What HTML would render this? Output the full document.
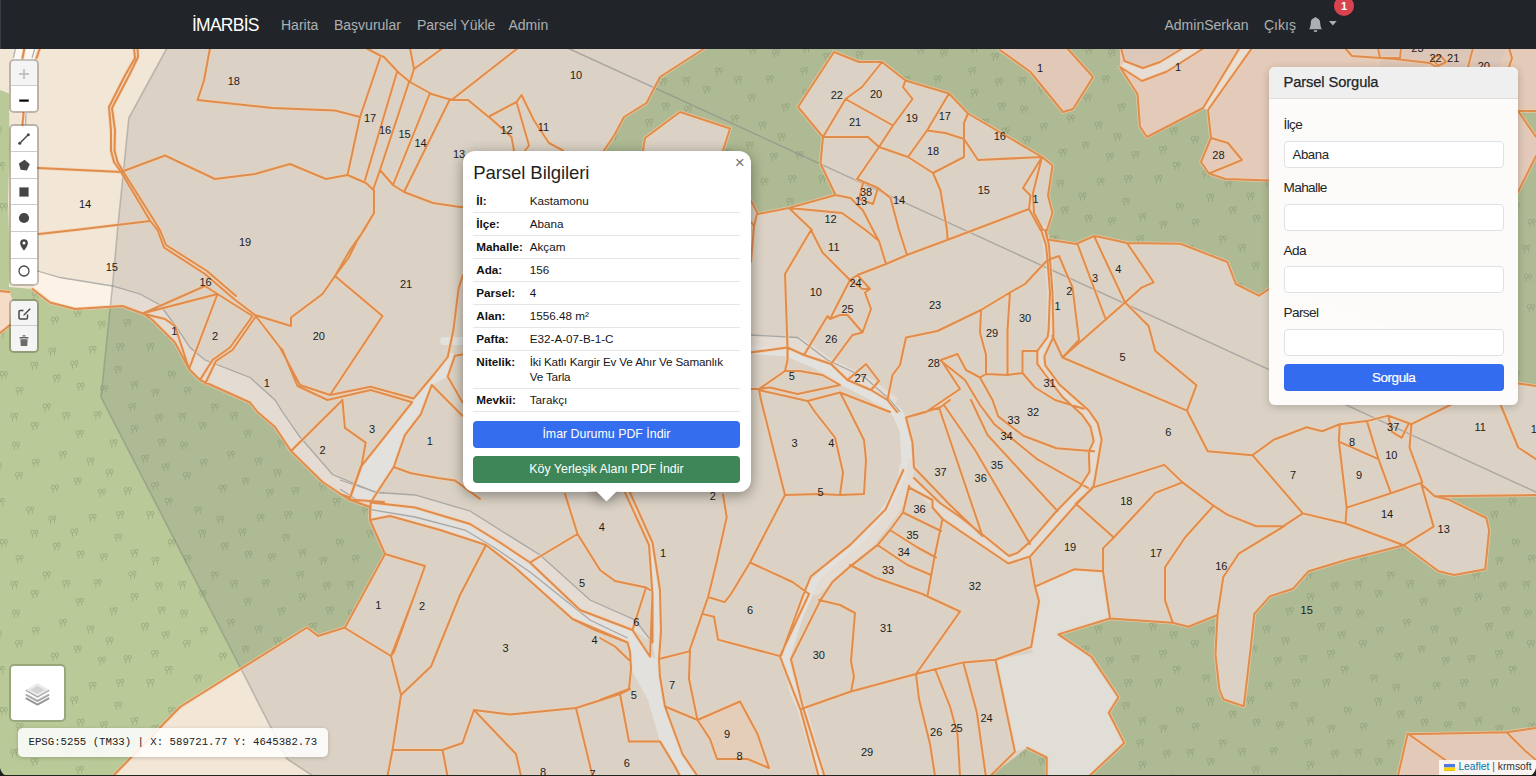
<!DOCTYPE html>
<html lang="tr">
<head>
<meta charset="utf-8">
<title>İMARBİS - Harita</title>
<style>
*{box-sizing:border-box}
html,body{margin:0;padding:0}
body{width:1536px;height:776px;overflow:hidden;position:relative;background:#f2e6d6;
 font-family:"Liberation Sans",Arial,Helvetica,sans-serif;font-size:14px;color:#212529}
#map{position:absolute;left:0;top:0;display:block}
/* navbar */
.nav{position:absolute;left:0;top:0;width:1536px;height:49px;background:#212529;z-index:10}
.nav a{position:absolute;top:.5px;line-height:48px;height:48px;color:#adb0b3;text-decoration:none;font-size:14px;white-space:nowrap}
.nav a.brand{left:192px;color:#fff;font-size:17.5px;letter-spacing:-.75px;line-height:48px}
.badge{position:absolute;left:1334px;top:-4px;width:20px;height:20px;border-radius:10px;background:#d8434f;color:#fff;
 font-size:11px;font-weight:700;text-align:center;line-height:21px}
/* leaflet bars */
.bar{position:absolute;left:9px;width:30px;border:2px solid rgba(0,0,0,.22);border-radius:5px;background-clip:padding-box;z-index:5}
.bar div{width:26px;height:26px;background:#fff;border-bottom:1px solid #ccc;position:relative;display:block}
.bar div:first-child{border-radius:3px 3px 0 0}
.bar div:last-child{border-bottom:none;border-radius:0 0 3px 3px;}
.bar div svg{position:absolute;left:0;top:0}
.bar div.dis{background:#f4f4f4}
.zb div{height:25.800px}.zb div:last-child{height:24.800px}.zb svg{top:.800px!important}.db svg{top:-.3px!important}.db div{height:26.550px}.db div:last-child{height:25.550px}
.layers{position:absolute;left:8.700px;top:664.400px;width:57.500px;height:57.500px;border:2px solid rgba(0,0,0,.17);border-radius:5px;background:#fff;background-clip:padding-box;z-index:5}
.coords{position:absolute;left:18px;top:727.5px;width:310px;height:29.5px;border-radius:5px;background:rgba(255,255,255,.86);
 font-family:"Liberation Mono","DejaVu Sans Mono",monospace;font-size:10.7px;line-height:29.5px;padding-left:10.5px;color:#222;white-space:pre;
 box-shadow:0 1px 4px rgba(0,0,0,.18);z-index:5}
.attr{position:absolute;right:0;top:760.2px;height:14.800px;background:rgba(255,255,255,.82);font-size:10.300px;line-height:14.800px;padding:0 4.500px 0 4.500px;color:#333;z-index:5;white-space:nowrap}
.attr a{color:#0078a8;text-decoration:none}
.attr svg{display:inline-block;vertical-align:-.5px;margin-right:3.5px}
/* popup */
.popup{position:absolute;left:463.2px;top:151px;width:287.5px;height:340.5px;background:#fff;border-radius:12px;
 box-shadow:0 3px 14px rgba(0,0,0,.4);z-index:7;font-size:12px;color:#333}
.tipc{position:absolute;left:586px;top:491.4px;width:40px;height:20px;overflow:hidden;z-index:7}
.tip{width:17px;height:17px;background:#fff;transform:rotate(45deg);margin:-10px auto 0;box-shadow:0 3px 14px rgba(0,0,0,.4)}
.popup h5{position:absolute;left:10px;top:9.700px;margin:0;font-size:18.6px;font-weight:400;line-height:24px;color:#1f1f1f;letter-spacing:-.1px;white-space:nowrap}
.popup .x{position:absolute;right:3px;top:2px;width:16px;height:20px;font-size:17px;line-height:20px;color:#757575;text-align:center}
.popup table{position:absolute;left:9.5px;top:38.700px;width:267.5px;border-collapse:collapse;font-size:11.700px;line-height:15px;color:#161616}
.popup td{white-space:nowrap;padding:3px 3px 4px;border-bottom:1px solid #e6e6e6;vertical-align:top}
.popup td:first-child{font-weight:700;width:54px;padding-left:3.5px;color:#111;white-space:nowrap}
.pbtn{position:absolute;left:9.5px;width:267.5px;height:27px;border-radius:4px;color:#fff;text-align:center;font-size:12.400px;line-height:27px;white-space:nowrap}
/* panel */
.panel{position:absolute;left:1269px;top:67px;width:248.5px;height:338px;background:rgba(253,252,251,.985);border-radius:6px;
 box-shadow:0 2px 8px rgba(0,0,0,.2);z-index:6;overflow:hidden}
.panel .hd{height:31.5px;background:#f0efef;border-bottom:1px solid #dfdfdf;padding-left:14.5px;font-size:14.700px;line-height:31px;color:#212529;letter-spacing:-.1px;-webkit-text-stroke:.25px #212529}
.panel label{position:absolute;left:14.5px;font-size:13.600px;letter-spacing:-.62px;line-height:16px;color:#212529}
.panel .inp{position:absolute;left:14.5px;width:220.3px;height:27.3px;border:1px solid #dee2e6;border-radius:4px;background:#fff;
 font-size:13.200px;letter-spacing:-.4px;line-height:25px;padding-left:8px;color:#212529}
.panel .btn{position:absolute;left:14.5px;top:296.7px;width:220.3px;height:27.3px;border-radius:4px;background:#336cee;color:#fff;text-align:center;font-size:13.500px;letter-spacing:-.45px;line-height:27px;-webkit-text-stroke:.2px #fff}
.edge{position:absolute;left:0;top:775px;width:1536px;height:1px;background:#23251f;z-index:20}
</style>
</head>
<body>
<svg id="map" width="1536" height="776" viewBox="0 0 1536 776">
<defs><g id="t" transform="scale(.97)"><ellipse cx="2" cy="2.5" rx="1.8" ry="2.1"/><ellipse cx="6" cy="2" rx="1.5" ry="1.800"/><path d="M2 4.600V8.500M6 3.800V7.500"/></g><pattern id="tr" width="168" height="168" patternUnits="userSpaceOnUse"><g fill="none" stroke="#9aad7f" stroke-width="1.050" opacity=".9"><use href="#t" x="76.0" y="94.0"/><use href="#t" x="155.3" y="78.2"/><use href="#t" x="31.0" y="86.0"/><use href="#t" x="105.8" y="133.2"/><use href="#t" x="15.8" y="51.0"/><use href="#t" x="15.2" y="136.0"/><use href="#t" x="116.5" y="7.0"/><use href="#t" x="165.0" y="162.1"/><use href="#t" x="165.0" y="-5.9"/><use href="#t" x="-3.0" y="162.1"/><use href="#t" x="-3.0" y="-5.9"/><use href="#t" x="109.9" y="103.4"/><use href="#t" x="26.5" y="2.5"/><use href="#t" x="88.8" y="10.0"/><use href="#t" x="74.0" y="141.5"/><use href="#t" x="76.8" y="46.7"/><use href="#t" x="141.2" y="118.9"/><use href="#t" x="53.0" y="38.6"/><use href="#t" x="48.6" y="11.8"/><use href="#t" x="128.7" y="67.3"/><use href="#t" x="0.1" y="35.2"/><use href="#t" x="12.3" y="105.7"/><use href="#t" x="130.8" y="45.3"/><use href="#t" x="162.0" y="127.4"/><use href="#t" x="-6.0" y="127.4"/><use href="#t" x="94.0" y="75.2"/><use href="#t" x="32.0" y="123.0"/><use href="#t" x="51.1" y="148.7"/><use href="#t" x="62.4" y="76.1"/><use href="#t" x="30.7" y="25.9"/><use href="#t" x="100.2" y="49.3"/><use href="#t" x="123.8" y="151.2"/><use href="#t" x="59.1" y="115.1"/><use href="#t" x="146.6" y="7.0"/><use href="#t" x="86.8" y="121.6"/><use href="#t" x="151.6" y="53.1"/><use href="#t" x="43.1" y="67.5"/><use href="#t" x="130.7" y="89.2"/><use href="#t" x="70.6" y="24.6"/><use href="#t" x="10.5" y="77.1"/><use href="#t" x="98.1" y="152.8"/><use href="#t" x="151.3" y="146.1"/><use href="#t" x="114.3" y="29.8"/><use href="#t" x="158.1" y="102.5"/></g></pattern></defs>
<rect width="1536" height="776" fill="#f2e6d6"/>
<g>
<polygon points="0,90 9,93.5 9.5,150 8,200 9.5,250 9,287 32.5,289 50,302.5 75,309 122.5,306 144,314 152.5,320 175,342.5 189,369 200,380 250,402.5 257.5,412 275,427 291,451 322.5,482 349,499.5 370,507 370,520 385,554 345,627.5 318,636 307,627.5 180,707 113,776 0,776" fill="#bac998"/>
<polygon points="705,48 660,77 646.5,103 624,117 615,134 604,150.5 598,165 700,170 748,195 758,214 789,208 835.5,195 850,170 1042,157 1052.5,165.5 1048,195.5 1052.5,213 1047,230 1047.5,239.5 1076,244 1094,236 1100,237 1127,243 1180.5,243.7 1227.4,262 1235.8,284 1259,295.7 1269,289 1400,330 1518,383.4 1536,386 1536,48" fill="#bac998"/>
<polygon points="1058.4,634.4 1110,618.5 1172.8,622.8 1188.4,626.7 1217.5,615 1215.5,654.6 1219.4,689.5 1223.3,699.2 1243.8,706.2 1250.4,650.7 1254.3,613.9 1269.8,596.4 1293.1,588.7 1308.6,571.2 1347.5,559.5 1403.7,545.2 1438.6,571.2 1454.2,575 1485.2,569.3 1489.1,530.4 1486.4,518 1448.3,499.4 1434.7,496.3 1536,495 1536,776 1089.4,776 1124.3,743.1 1108.8,712.8 1118.5,697.3 1091.3,656.6" fill="#bac998"/>
<polygon points="990.4,776 1027.3,747.8 1046.7,757.5 1046.7,776" fill="#bac998"/>
<polygon points="0,90 9,93.5 9.5,150 8,200 9.5,250 9,287 32.5,289 50,302.5 75,309 122.5,306 144,314 152.5,320 175,342.5 189,369 200,380 250,402.5 257.5,412 275,427 291,451 322.5,482 349,499.5 370,507 370,520 385,554 345,627.5 318,636 307,627.5 180,707 113,776 0,776" fill="url(#tr)"/>
<polygon points="705,48 660,77 646.5,103 624,117 615,134 604,150.5 598,165 700,170 748,195 758,214 789,208 835.5,195 850,170 1042,157 1052.5,165.5 1048,195.5 1052.5,213 1047,230 1047.5,239.5 1076,244 1094,236 1100,237 1127,243 1180.5,243.7 1227.4,262 1235.8,284 1259,295.7 1269,289 1400,330 1518,383.4 1536,386 1536,48" fill="url(#tr)"/>
<polygon points="1058.4,634.4 1110,618.5 1172.8,622.8 1188.4,626.7 1217.5,615 1215.5,654.6 1219.4,689.5 1223.3,699.2 1243.8,706.2 1250.4,650.7 1254.3,613.9 1269.8,596.4 1293.1,588.7 1308.6,571.2 1347.5,559.5 1403.7,545.2 1438.6,571.2 1454.2,575 1485.2,569.3 1489.1,530.4 1486.4,518 1448.3,499.4 1434.7,496.3 1536,495 1536,776 1089.4,776 1124.3,743.1 1108.8,712.8 1118.5,697.3 1091.3,656.6" fill="url(#tr)"/>
<polygon points="990.4,776 1027.3,747.8 1046.7,757.5 1046.7,776" fill="url(#tr)"/>
</g>
<polygon points="834,52 859,62 882,62 905.5,80.5 949,93.5 968,113.5 1042,157 1000,175 835.5,195 820.5,163.5 823,137 798,107" fill="#f2e6d6"/>
<polygon points="643,152 645,138 680,112 730,128.5 723,152 715,200 650,200" fill="#f2e6d6"/>
<polygon points="1035,586.7 1074,569.3 1103,571.2 1110,618.5 1058.4,634.4 1091.3,656.6 1118.5,697.3 1108.8,712.8 1124.3,743.1 1089.4,776 1046.7,776 1046.7,757.5 1027.3,747.8 1014.9,751.6 995.5,659.7 1033.1,652.7 1031.2,646.9 1039,601" fill="#f8f5ec"/>
<polygon points="37.5,271 60,277.5 112.5,286 140,294 160,305 175,325 190,347.5 205,360 250,377.5 275,400 282.5,412 300,437 332.5,474.5 375,492 370,507 349,499.5 322.5,482 291,451 275,427 257.5,412 250,402.5 200,380 189,369 175,342.5 152.5,320 144,314 122.5,306 75,309 50,302.5 32.5,289" fill="#fdf2e6"/>
<polygon points="340,480 377.5,492.5 415,495 470,511 540,555 590,600 635,620 652.5,642.5 632.5,630 580,610 530,562.5 500,542.5 470,524 415,507.5 371,502.5 340,488" fill="#fdf2e6"/>
<polyline points="751,344 797.5,346 827.5,367 865,385 893,406" fill="none" stroke="#fdf2e6" stroke-width="18" stroke-linejoin="round"/>
<polygon points="434.2,374 414.6,397.3 412.2,402.2 361.5,465.8 349.8,498.9 370.6,502.5 393.8,467 404.9,435.2 420.8,414.4 431.8,385 447.7,376.5 455,355.7 451,352 447.7,357" fill="#fcf9f4"/>
<polygon points="371,502.5 415,507.5 470,524 500,542.5 530,562.5 580,610 632.5,630 650,656.5 659,659 660,676.5 665,706.5 682.5,754 697.5,776 680,776 675,766.5 660,741.5 648,700 631,669 630,652 627.5,642.5 572.5,619 515,567.5 486,545 440,530 390,516 370,520" fill="#fcf9f4"/>
<polygon points="647,540 649,545 652.5,595 652.5,642.5 655,657 659,659 661,631.5 660,590 652.5,542.5" fill="#fcf9f4"/>
<polyline points="444,341 463,341" fill="none" stroke="#fcf9f4" stroke-width="8" stroke-linejoin="round" stroke-linecap="round"/>
<polyline points="750,350 787.5,352.5 805,360 827.5,369 845,382.5 867.5,394 888,404" fill="none" stroke="#fcf9f4" stroke-width="8" stroke-linejoin="round" stroke-linecap="round"/>
<polyline points="888,404 898,414 905,430 907,462.5" fill="none" stroke="#fcf9f4" stroke-width="11" stroke-linejoin="round" stroke-linecap="round"/>
<polyline points="907,466 904,485 893,508 866,543 838,566 815,588" fill="none" stroke="#fdf2e6" stroke-width="15" stroke-linejoin="round" stroke-linecap="round"/>
<polyline points="905,462.5 901,480 888,505 863,538 833,563 811,584" fill="none" stroke="#fcf9f4" stroke-width="6" stroke-linejoin="round" stroke-linecap="round"/>
<polyline points="812,585 797.5,619 786,656.5 794.5,692 802,709 821.5,776" fill="none" stroke="#fcf9f4" stroke-width="9" stroke-linejoin="round" stroke-linecap="round"/>
<polyline points="912,481 940,510 960,524 981,540 1008.5,559.5 1030,550 1065,509 1084,489 1092,472 1095,452 1097.5,440 1094,425 1085,412.5 1061,391 1044.5,369.5 1041,360 1041,354 1050.5,337 1051,292 1047,245 1043,230" fill="none" stroke="#fdf2e6" stroke-width="8" stroke-linejoin="round" stroke-linecap="round"/>
<polyline points="26.5,47 23.5,59" fill="none" stroke="#fcf9f4" stroke-width="21" stroke-linejoin="round" stroke-linecap="round"/>
<polyline points="24,113 23,125" fill="none" stroke="#fcf9f4" stroke-width="5" stroke-linejoin="round" stroke-linecap="round"/>
<polyline points="37.5,271 60,277.5 112.5,286 140,294 160,305 175,325 190,347.5 205,360 250,377.5 275,400 282.5,412 300,437 332.5,474.5 375,492 384,493" fill="none" stroke="#b3b1ad" stroke-width="1.3"/>
<polyline points="340,480 377.5,492.5 415,495 470,511 540,555 590,600 635,620 652.5,642.5" fill="none" stroke="#b3b1ad" stroke-width="1.3"/>
<polyline points="750,335 797.5,337.5 827.5,360 865,377.5 890,400 900,412" fill="none" stroke="#b3b1ad" stroke-width="1.3"/>
<polyline points="340,489 372.5,510 415,517 465,530 495,548 530,572 565,600 590,620 627.5,638" fill="none" stroke="#b3b1ad" stroke-width="1.3"/>
<polyline points="15.5,48 13.5,58" fill="none" stroke="#b3b1ad" stroke-width="1.3"/>
<polyline points="35,48 32,58" fill="none" stroke="#b3b1ad" stroke-width="1.3"/>
<polyline points="26,113 25.5,125" fill="none" stroke="#b3b1ad" stroke-width="1.3"/>
<polygon points="171.5,40 167,48 128.8,118 117.5,230 113,280 101,397 240,667 287,759 313,776 320,780 1545,780 1545,40" fill="rgb(130,130,130)" fill-opacity=".2" stroke="#777" stroke-opacity=".38" stroke-width="1.600"/>
<polygon points="1000,48 1000,50 1030.5,72 1063,112 1073,109 1093,77 1067,48" fill="#e2c8b7"/>
<polygon points="1120,48 1120,67 1137.5,94 1140,126.5 1147,137 1203,108 1208,110 1211,138 1201,162 1209,173.5 1225.5,179 1269,180.5 1400,182 1518,192 1536,156 1536,137 1518,111 1536,111 1536,48" fill="#e4cab8"/>
<polygon points="1121,48 1124.5,61 1143,68 1160,62 1183,48" fill="#dcc7b9"/>
<polygon points="1120,67 1124.5,61 1143,68 1160,62 1183,48 1204,48 1167,71.5 1142,81" fill="#e6ddd4"/>
<polygon points="1239.5,48 1203,108 1208,110 1252,48" fill="#e9dfd3"/>
<polygon points="1380,48 1380,66 1500,66 1506,48" fill="#dcc6b8"/>
<polygon points="1518,111 1536,137 1536,156 1518,192" fill="#e3c9b9"/>
<polygon points="1518,111 1536,111 1536,137" fill="#b0ba93"/>
<polygon points="1397.9,776 1407.6,734.2 1506.6,732.2 1536,728 1536,776" fill="#e3c9b8"/>
<polygon points="697.5,720 740,701.5 757.5,734 769,768 747.5,759 717,759 710,739" fill="#e4cdb9"/>
<polygon points="0,291 9.5,292 12.5,300 10,325 0,332.5" fill="#f4dcc7"/>
<polyline points="567.5,48 1536,492" fill="none" stroke="#8a8a8a" stroke-width="1.4" stroke-opacity=".6"/>
<path id="pl" d="M134 48 L135 58 L125 75.5 L109 107 L111 130.5 L111 150.5 L114 162 L121 172M137.5 48 L138 57 L129 75.5 L112 108 L115 130.5 L114.5 150.5 L117.5 162 L122.5 170.5M38 168 L121.7 172M121 172 L165 155.5 L215 179 L255 174 L290 164 L326 179 L347.5 175 L366 183 L374 190.5M210 48 L204 80.5 L197.5 100 L272.5 108 L335 110.5 L360 117M366 48 L380 55.5 L384 57 L399 73 L410 82 L431.5 94 L451.5 100 L468 100 L493 120.5 L511.5 137 L514 150.5M380 58 L360 117 L347.5 175M397 72 L365 180M409 82 L380 170 L373 190M430 93 L393 185M450 99 L404 192M380 170 L393 185 L404 192 L433 203 L460 207 L464 207M374 190.5 L374 213 L357 241 L348.5 258 L335 276M121 172 L150 220.5 L157.5 230 L164 247.5 L205 274 L234 299 L255 315 L291 326 L291 317.5 L322.5 294 L335 276 L350 250 L364 230 L374 213M122.5 170.5 L152.5 218 L160 230 L166 245 L207 271 L236 296M150 221 L75 230 L39 234M410 48 L414 69 L410 82M443 48 L414 69M518 48 L451.5 100M490 116 L516.5 102 L521.5 95 L534 120.5 L549 143 L563 150.5M516.5 102 L529 145.5 L525 150.5M705 48 L660 77 L646.5 103 L624 117 L615 134 L604 150.5M643 150.5 L645 138 L680 112 L730 128.5 L723 150.5M24.5 48 L22.5 58M40 48 L36.5 58M23.5 113 L22.5 125M0 291 L9.5 292M0 333 L10 325M32.5 289 L50 302.5 L75 309 L122.5 306 L144 314 L152.5 320 L175 342.5 L189 369 L200 380 L250 402.5 L257.5 412 L275 427 L291 451 L322.5 482 L349 499.5 L370 507 L370 520 L385 554 L345 627.5 L318 636 L307 627.5 L180 707 L113 776M335 276 L382.5 316 L330 395 L300 385 L280 347.5 L255 315M144 313 L205 286 L217.5 294 L144 313M217.5 294 L189 369M144 314 L165 319 L175 326 L189 369M217.5 294 L252.5 316 L230 347.5 L212.5 360 L200 380M255 317.5 L232.5 350 L216 361 L205 384M300 385 L330 395 L370.6 386.8 L413.4 398.5 L414.6 397.3 L434.2 374 L447.7 357 L453.4 330 L458.6 288 L463 275M282 349 L297.5 386 L327.5 400 L370.6 390 L412.2 402.2M342.4 399.8 L344.9 427.9 L365.7 442.6 L361.5 465.8 L349.8 498.9M342.5 400 L291 451M361.5 465.8 L412.2 402.2M361 466 L350 497.5 L340 494M462.4 415.7 L431.8 385 L420.8 414.4 L404.9 435.2 L393.8 467 L411 473.2 L437.9 478 L455 480.5 L480 498.9M393.8 467 L370.6 502.5 L370 520M462.4 354.5 L455 355.7 L447.7 376.5 L462.4 402.2M349 499.5 L384 502M371 502.5 L415 507.5 L470 524 L500 542.5 L530 562.5 L580 610 L632.5 630M370 520 L390 516 L440 530 L486 545 L515 567.5 L572.5 619 L627.5 642.5 L630 652 L631 669 L629 689 L600 700M486 545 L460 595 L431 666.5 L401 695M385 554 L425 566 L394 652 L391 656M565 494 L577.5 534 L600 570 L615 581 L646 587.5 L650 590M577.5 534 L530 562.5M625 492.5 L649 545 L652.5 595 L652.5 642.5M630 492.5 L652.5 542.5 L660 590 L661 631.5 L659 659 L660 676.5 L665 706.5 L682.5 754 L697.5 776M646 587.5 L632.5 630 L650 656.5 L652.5 594M572.5 619 L595 630 L627.5 642.5M600 638 L615 646.5 L629 660M345 628 L391 656 L401 695 L392.5 750 L387.5 776M415 594 L391 656M392.5 750 L442.5 750 L462.5 743 L474 710 L510 714.5 L576 708 L620 694 L630 689M442.5 750 L447.5 776M474 710 L516 754 L521 776M576 708 L592.5 776M620 694 L629 741.5 L660 741.5 L675 766.5 L680 776M659 659 L689.2 651.4M708.1 597 L724.7 602.1 L731 594M690 650 L689 679 L697.5 720 L665 706.5M697.5 720 L740 701.5 L757.5 734 L769 768 L747.5 759 L717 759 L710 739 L697.5 720M702.2 613.9 L714 616.7 L718 639.6 L780 656.1 L809 594M780 656.5 L787 675 L800.8 710.5 L818.5 776M723 494.4 L726.7 517.3 L716 564.6 L708.1 597 L702.2 613.9 L689.2 651.4M761 400 L785 495 L750 562.5 L731 594M785 495 L820 494 L840 495 L864 494M807.5 401 L815 412 L835 437.5 L843 472.5 L840 495M840 392.5 L845 402 L864 440 L866 460 L864 494M750 562.5 L792.5 582 L809 594M811 230 L785 274 L787.5 347.5 L787.5 360 L785 371 L759 389 L750 389M811 230 L822.5 252.5 L850 280 L830 319 L827.5 316 L804 355 L831 364M899 230 L907 255M947 230 L947.5 239.5M1029 209 L971 231 L907 255 L886 264 L857.5 275 L850 280M857.5 275 L870 289 L865 292.5 L871 309 L862.5 332.5 L852.5 335 L831 364M850 280 L862.5 289 L870 289M830 319 L840 315 L847.5 315 L862.5 332.5M750 352.5 L787.5 347.5 L804 355 L831 364 L847.5 380 L871 390 L887.5 400 L897 412M759 389 L770 387.5 L797.5 394 L840 385 L822.5 375 L800 371 L785 371M847.5 380 L866 364 L879 381 L871 390M759 390 L761 400M759 390 L807.5 401 L840 392.5 L890 412M1047.5 260 L1025 284 L1010 292.5 L981 310 L937.5 331 L906 337.5 L900 365 L892.5 375 L887.5 400M981 310 L980 332.5 L986 355 L986 374M1010 292.5 L1007.5 330 L1007.5 375M980 377.5 L986 374 L1007.5 375 L1022.5 373 L1022.5 351 L1037.5 351M1041 230 L1046 245 L1047.5 260 L1050 292.5 L1048.6 330 L1047.6 337 L1037.3 351 L1037.3 363.8 L1044.4 373.5 L1063 397.6 L1081.7 414.4 L1090.4 426.6 L1093.7 441.1 L1088.8 451.7 L1089.5 471.7 L1079.8 487.2 L1056.6 511 L1029.2 542.6 L1017.3 552.9 L1009 556 L982.5 534.5 L960 516.8 L940 503 L914 478M1045 230 L1049 245 L1050 260 L1052.5 292.5 L1053.4 330 L1053.4 337 L1044.4 356.4 L1045.3 365.4 L1059.8 384.8 L1088.8 410.5 L1097.8 423.4 L1101.7 439.5 L1093.7 486.2 L1074.3 506.5 L1030.2 556.4 L1008.3 563.5 L980.9 545 L960 531 L942.5 519M1047.5 260 L1059 256 L1072.5 287.5 L1079 340 L1062.5 357.5 L1052.5 336M1077.5 244 L1105 317.5M1094 236 L1125 302.4M1046 230 L1047.5 239.5 L1076 244 L1094 236 L1100 237 L1127 243 L1180.5 243.7 L1227.4 262 L1235.8 284 L1259 295.7 L1269 289M1127 243 L1153.6 282.3 L1142 287.3 L1125 302.4 L1062.5 357.5M1062.5 357.5 L1187 410.7 L1196.5 385.2 L1155.3 351 L1148.6 326 L1125 302.4M1187 410.7 L1207.7 451.3 L1252.4 455.2 L1302.8 513.4 L1283.4 526.2 L1256.3 526.2 L1227.2 514.6 L1213.6 505.7 L1182.5 482.4 L1164.3 464.9 L1093.3 487.4M1022.5 373 L1035 387.5 L1055 400 L1083.6 408.7M941 360 L957.5 354 L966 370 L980 377.5 L992.5 400 L998.2 416.4 L1023.4 435.8 L1056.4 448.2 L1094 451.3M941 360 L960 389 L940 402.5 L926 412 L906 417.5M941 361 L965 380 L980 405 L994.3 424.2 L1037 459.1 L1088 488M906 417.5 L940 407.5 L950 400M906 417.5 L912.5 442.5 L914 467.5 L950 505 L982.5 536M939 407.5 L982.5 536M944 405 L975 450 L1030 544M971 400 L987.5 435 L1057.5 511M909 487.5 L932.5 500 L932.5 507.5 L942.5 519 L940 531 L934.7 556 L927.5 596M909.2 485.8 L903 512.5 L890 530 L877.7 544.9 L850.1 566.6 L832.5 582 L820.5 600.1M903 512.5 L941 531M890 530 L917.5 547.5 L936 557.5M877.5 545 L907.5 565 L931 575M850 565 L875 577.5 L922.5 594 L927.5 596.5 L960 611.5 L916 674M1030 557.6 L1035 586.7 L1039 601 L1031.2 646.9 L995.5 659.7 L963.3 662.4 L916 674 L851 691.5 L801 709M820.5 600.1 L791 659.3 L802.8 706.6 L824.5 776M819 600 L840 605 L855 613 L851 661.5 L854 676.5 L851 691.5M916 674 L919 699 L930 744 L935 776M935 669 L950 706.5 L957.5 734 L960 776M963.3 662.4 L976.9 712.8 L985.8 776M995.5 659.7 L1014.9 751.6 L990.4 776M1027.3 747.8 L1046.7 757.5 L1046.7 776M1035 586.7 L1074 569.3 L1103 571.2 L1110 618.5 L1058.4 634.4 L1091.3 656.6 L1118.5 697.3 L1108.8 712.8 L1124.3 743.1 L1089.4 776M1093.3 487.4 L1075.8 503.7 L1113.8 537.5 L1103 548.4 L1103 571.2M1182.5 482.4 L1155.4 492.9 L1113.8 537.5M1213.6 505.7 L1184.5 538.2 L1165 567.3 L1165 600.3 L1172.8 622.8M1283.4 526.6 L1238.8 553.7 L1223.3 577 L1217.5 615M1110 618.5 L1172.8 622.8 L1188.4 626.7 L1217.5 615 L1215.5 654.6 L1219.4 689.5 L1223.3 699.2 L1243.8 706.2 L1250.4 650.7 L1254.3 613.9 L1269.8 596.4 L1293.1 588.7 L1308.6 571.2 L1347.5 559.5 L1403.7 545.2 L1438.6 571.2 L1454.2 575 L1485.2 569.3 L1489.1 530.4 L1486.4 518 L1448.3 499.4 L1434.7 496.3 L1536 495M1302.8 513.4 L1345.5 523.5 L1403.7 545.2 L1433.6 526.6 L1421.2 483.9 L1434.7 496.3M1345.5 523.5 L1346.7 507.6 L1338.9 441.6 L1339.7 424.2M1346.7 507.6 L1390.9 493.2 L1422.3 482.4 L1409.5 447.5 L1411.5 424.2M1338.9 441.6 L1378.5 459.1 L1390.9 493.2M1366.9 421.1 L1378.5 459.1M1252.4 455.2 L1273.7 439.7 L1306.7 427.3 L1322.2 431.2 L1339.7 424.2 L1366.9 421.1 L1388.2 415.6 L1411.5 424.2 L1452.2 404M1388.2 415.6 L1392.1 431.9 L1401.8 437.8 L1408.4 424.2M1500.7 404.8 L1518.2 447.5 L1536 459.1M1518 383.4 L1536 386M1397.9 776 L1407.6 734.2 L1506.6 732.2 L1536 728M1407.6 733.5 L1468 776M1506.6 732.2 L1526 751.6 L1536 760M834 52 L859 62 L882 62 L905.5 80.5 L949 93.5 L968 113.5 L1042 157 L1052.5 165.5 L1048 195.5 L1052.5 213 L1047 230M834 52 L798 107 L823 137 L820.5 163.5 L835.5 195 L789 208 L758 214M882 62 L862 87 L845.5 99 L823 137M845.5 99 L893 125.5M905.5 80.5 L903 87 L912.5 99 L893 125.5 L879 147 L857 179 L878 188 L873 204 L859 199 L863 183M823 137 L868 137 L879 147 L908 157 L933 173 L940.5 190.5 L947 230M949 93.5 L927 130.5 L908 157M927 130.5 L945.5 133 L964 139M968 113.5 L964 123 L964 139 L964 157 L933 173M964 139 L978 160 L1042 157M1042 157 L1023 188 L1030.5 195.5 L1029 209 L1040.5 230M1042 157 L1033 193 L1034 213 L1043 230M878 188 L890.5 198 L899 230M835.5 195 L850.5 198 L863 210.5 L873 230 L879 241 L886 264M789 208 L842 213 L865.5 230 L879 241M789 208 L812 230M1000 50 L1030.5 72 L1063 112 L1073 109 L1093 77 L1067 48M1120 67 L1142 81 L1167 71.5 L1204 48M1120 67 L1137.5 94 L1140 126.5 L1147 137 L1203 108 L1239.5 48M1121 48 L1124.5 61 L1143 68 L1160 62 L1183 48M1208 110 L1252 48M1208 110 L1211 138 L1228 143 L1242 160 L1209 173.5 L1201 162 L1211 138M1209 173.5 L1225.5 179 L1269 180.5M1518 111 L1536 111M1518 111 L1536 137M1536 156 L1518 192M1509 48 L1512 58 L1509 67M1345 48 L1352 56 L1395 59 L1430 63 L1436 67M1378 48 L1380 58 L1400 58 L1401 48M1432 58 L1440 55 L1446 62 L1438 66 L1432 58M1473 48 L1468 67M903.3 470 L885.6 509.4 L850.1 544.9 L810.7 576.5 L802.8 596.2 L781.1 655.3M748 195 L758 214M757 214 L754 226 L751 262M751 222 L754 226" fill="none" stroke="#f8cfa8" stroke-opacity=".7" stroke-width="3.600" stroke-linejoin="round" stroke-linecap="round"/>
<path d="M134 48 L135 58 L125 75.5 L109 107 L111 130.5 L111 150.5 L114 162 L121 172M137.5 48 L138 57 L129 75.5 L112 108 L115 130.5 L114.5 150.5 L117.5 162 L122.5 170.5M38 168 L121.7 172M121 172 L165 155.5 L215 179 L255 174 L290 164 L326 179 L347.5 175 L366 183 L374 190.5M210 48 L204 80.5 L197.5 100 L272.5 108 L335 110.5 L360 117M366 48 L380 55.5 L384 57 L399 73 L410 82 L431.5 94 L451.5 100 L468 100 L493 120.5 L511.5 137 L514 150.5M380 58 L360 117 L347.5 175M397 72 L365 180M409 82 L380 170 L373 190M430 93 L393 185M450 99 L404 192M380 170 L393 185 L404 192 L433 203 L460 207 L464 207M374 190.5 L374 213 L357 241 L348.5 258 L335 276M121 172 L150 220.5 L157.5 230 L164 247.5 L205 274 L234 299 L255 315 L291 326 L291 317.5 L322.5 294 L335 276 L350 250 L364 230 L374 213M122.5 170.5 L152.5 218 L160 230 L166 245 L207 271 L236 296M150 221 L75 230 L39 234M410 48 L414 69 L410 82M443 48 L414 69M518 48 L451.5 100M490 116 L516.5 102 L521.5 95 L534 120.5 L549 143 L563 150.5M516.5 102 L529 145.5 L525 150.5M705 48 L660 77 L646.5 103 L624 117 L615 134 L604 150.5M643 150.5 L645 138 L680 112 L730 128.5 L723 150.5M24.5 48 L22.5 58M40 48 L36.5 58M23.5 113 L22.5 125M0 291 L9.5 292M0 333 L10 325M32.5 289 L50 302.5 L75 309 L122.5 306 L144 314 L152.5 320 L175 342.5 L189 369 L200 380 L250 402.5 L257.5 412 L275 427 L291 451 L322.5 482 L349 499.5 L370 507 L370 520 L385 554 L345 627.5 L318 636 L307 627.5 L180 707 L113 776M335 276 L382.5 316 L330 395 L300 385 L280 347.5 L255 315M144 313 L205 286 L217.5 294 L144 313M217.5 294 L189 369M144 314 L165 319 L175 326 L189 369M217.5 294 L252.5 316 L230 347.5 L212.5 360 L200 380M255 317.5 L232.5 350 L216 361 L205 384M300 385 L330 395 L370.6 386.8 L413.4 398.5 L414.6 397.3 L434.2 374 L447.7 357 L453.4 330 L458.6 288 L463 275M282 349 L297.5 386 L327.5 400 L370.6 390 L412.2 402.2M342.4 399.8 L344.9 427.9 L365.7 442.6 L361.5 465.8 L349.8 498.9M342.5 400 L291 451M361.5 465.8 L412.2 402.2M361 466 L350 497.5 L340 494M462.4 415.7 L431.8 385 L420.8 414.4 L404.9 435.2 L393.8 467 L411 473.2 L437.9 478 L455 480.5 L480 498.9M393.8 467 L370.6 502.5 L370 520M462.4 354.5 L455 355.7 L447.7 376.5 L462.4 402.2M349 499.5 L384 502M371 502.5 L415 507.5 L470 524 L500 542.5 L530 562.5 L580 610 L632.5 630M370 520 L390 516 L440 530 L486 545 L515 567.5 L572.5 619 L627.5 642.5 L630 652 L631 669 L629 689 L600 700M486 545 L460 595 L431 666.5 L401 695M385 554 L425 566 L394 652 L391 656M565 494 L577.5 534 L600 570 L615 581 L646 587.5 L650 590M577.5 534 L530 562.5M625 492.5 L649 545 L652.5 595 L652.5 642.5M630 492.5 L652.5 542.5 L660 590 L661 631.5 L659 659 L660 676.5 L665 706.5 L682.5 754 L697.5 776M646 587.5 L632.5 630 L650 656.5 L652.5 594M572.5 619 L595 630 L627.5 642.5M600 638 L615 646.5 L629 660M345 628 L391 656 L401 695 L392.5 750 L387.5 776M415 594 L391 656M392.5 750 L442.5 750 L462.5 743 L474 710 L510 714.5 L576 708 L620 694 L630 689M442.5 750 L447.5 776M474 710 L516 754 L521 776M576 708 L592.5 776M620 694 L629 741.5 L660 741.5 L675 766.5 L680 776M659 659 L689.2 651.4M708.1 597 L724.7 602.1 L731 594M690 650 L689 679 L697.5 720 L665 706.5M697.5 720 L740 701.5 L757.5 734 L769 768 L747.5 759 L717 759 L710 739 L697.5 720M702.2 613.9 L714 616.7 L718 639.6 L780 656.1 L809 594M780 656.5 L787 675 L800.8 710.5 L818.5 776M723 494.4 L726.7 517.3 L716 564.6 L708.1 597 L702.2 613.9 L689.2 651.4M761 400 L785 495 L750 562.5 L731 594M785 495 L820 494 L840 495 L864 494M807.5 401 L815 412 L835 437.5 L843 472.5 L840 495M840 392.5 L845 402 L864 440 L866 460 L864 494M750 562.5 L792.5 582 L809 594M811 230 L785 274 L787.5 347.5 L787.5 360 L785 371 L759 389 L750 389M811 230 L822.5 252.5 L850 280 L830 319 L827.5 316 L804 355 L831 364M899 230 L907 255M947 230 L947.5 239.5M1029 209 L971 231 L907 255 L886 264 L857.5 275 L850 280M857.5 275 L870 289 L865 292.5 L871 309 L862.5 332.5 L852.5 335 L831 364M850 280 L862.5 289 L870 289M830 319 L840 315 L847.5 315 L862.5 332.5M750 352.5 L787.5 347.5 L804 355 L831 364 L847.5 380 L871 390 L887.5 400 L897 412M759 389 L770 387.5 L797.5 394 L840 385 L822.5 375 L800 371 L785 371M847.5 380 L866 364 L879 381 L871 390M759 390 L761 400M759 390 L807.5 401 L840 392.5 L890 412M1047.5 260 L1025 284 L1010 292.5 L981 310 L937.5 331 L906 337.5 L900 365 L892.5 375 L887.5 400M981 310 L980 332.5 L986 355 L986 374M1010 292.5 L1007.5 330 L1007.5 375M980 377.5 L986 374 L1007.5 375 L1022.5 373 L1022.5 351 L1037.5 351M1041 230 L1046 245 L1047.5 260 L1050 292.5 L1048.6 330 L1047.6 337 L1037.3 351 L1037.3 363.8 L1044.4 373.5 L1063 397.6 L1081.7 414.4 L1090.4 426.6 L1093.7 441.1 L1088.8 451.7 L1089.5 471.7 L1079.8 487.2 L1056.6 511 L1029.2 542.6 L1017.3 552.9 L1009 556 L982.5 534.5 L960 516.8 L940 503 L914 478M1045 230 L1049 245 L1050 260 L1052.5 292.5 L1053.4 330 L1053.4 337 L1044.4 356.4 L1045.3 365.4 L1059.8 384.8 L1088.8 410.5 L1097.8 423.4 L1101.7 439.5 L1093.7 486.2 L1074.3 506.5 L1030.2 556.4 L1008.3 563.5 L980.9 545 L960 531 L942.5 519M1047.5 260 L1059 256 L1072.5 287.5 L1079 340 L1062.5 357.5 L1052.5 336M1077.5 244 L1105 317.5M1094 236 L1125 302.4M1046 230 L1047.5 239.5 L1076 244 L1094 236 L1100 237 L1127 243 L1180.5 243.7 L1227.4 262 L1235.8 284 L1259 295.7 L1269 289M1127 243 L1153.6 282.3 L1142 287.3 L1125 302.4 L1062.5 357.5M1062.5 357.5 L1187 410.7 L1196.5 385.2 L1155.3 351 L1148.6 326 L1125 302.4M1187 410.7 L1207.7 451.3 L1252.4 455.2 L1302.8 513.4 L1283.4 526.2 L1256.3 526.2 L1227.2 514.6 L1213.6 505.7 L1182.5 482.4 L1164.3 464.9 L1093.3 487.4M1022.5 373 L1035 387.5 L1055 400 L1083.6 408.7M941 360 L957.5 354 L966 370 L980 377.5 L992.5 400 L998.2 416.4 L1023.4 435.8 L1056.4 448.2 L1094 451.3M941 360 L960 389 L940 402.5 L926 412 L906 417.5M941 361 L965 380 L980 405 L994.3 424.2 L1037 459.1 L1088 488M906 417.5 L940 407.5 L950 400M906 417.5 L912.5 442.5 L914 467.5 L950 505 L982.5 536M939 407.5 L982.5 536M944 405 L975 450 L1030 544M971 400 L987.5 435 L1057.5 511M909 487.5 L932.5 500 L932.5 507.5 L942.5 519 L940 531 L934.7 556 L927.5 596M909.2 485.8 L903 512.5 L890 530 L877.7 544.9 L850.1 566.6 L832.5 582 L820.5 600.1M903 512.5 L941 531M890 530 L917.5 547.5 L936 557.5M877.5 545 L907.5 565 L931 575M850 565 L875 577.5 L922.5 594 L927.5 596.5 L960 611.5 L916 674M1030 557.6 L1035 586.7 L1039 601 L1031.2 646.9 L995.5 659.7 L963.3 662.4 L916 674 L851 691.5 L801 709M820.5 600.1 L791 659.3 L802.8 706.6 L824.5 776M819 600 L840 605 L855 613 L851 661.5 L854 676.5 L851 691.5M916 674 L919 699 L930 744 L935 776M935 669 L950 706.5 L957.5 734 L960 776M963.3 662.4 L976.9 712.8 L985.8 776M995.5 659.7 L1014.9 751.6 L990.4 776M1027.3 747.8 L1046.7 757.5 L1046.7 776M1035 586.7 L1074 569.3 L1103 571.2 L1110 618.5 L1058.4 634.4 L1091.3 656.6 L1118.5 697.3 L1108.8 712.8 L1124.3 743.1 L1089.4 776M1093.3 487.4 L1075.8 503.7 L1113.8 537.5 L1103 548.4 L1103 571.2M1182.5 482.4 L1155.4 492.9 L1113.8 537.5M1213.6 505.7 L1184.5 538.2 L1165 567.3 L1165 600.3 L1172.8 622.8M1283.4 526.6 L1238.8 553.7 L1223.3 577 L1217.5 615M1110 618.5 L1172.8 622.8 L1188.4 626.7 L1217.5 615 L1215.5 654.6 L1219.4 689.5 L1223.3 699.2 L1243.8 706.2 L1250.4 650.7 L1254.3 613.9 L1269.8 596.4 L1293.1 588.7 L1308.6 571.2 L1347.5 559.5 L1403.7 545.2 L1438.6 571.2 L1454.2 575 L1485.2 569.3 L1489.1 530.4 L1486.4 518 L1448.3 499.4 L1434.7 496.3 L1536 495M1302.8 513.4 L1345.5 523.5 L1403.7 545.2 L1433.6 526.6 L1421.2 483.9 L1434.7 496.3M1345.5 523.5 L1346.7 507.6 L1338.9 441.6 L1339.7 424.2M1346.7 507.6 L1390.9 493.2 L1422.3 482.4 L1409.5 447.5 L1411.5 424.2M1338.9 441.6 L1378.5 459.1 L1390.9 493.2M1366.9 421.1 L1378.5 459.1M1252.4 455.2 L1273.7 439.7 L1306.7 427.3 L1322.2 431.2 L1339.7 424.2 L1366.9 421.1 L1388.2 415.6 L1411.5 424.2 L1452.2 404M1388.2 415.6 L1392.1 431.9 L1401.8 437.8 L1408.4 424.2M1500.7 404.8 L1518.2 447.5 L1536 459.1M1518 383.4 L1536 386M1397.9 776 L1407.6 734.2 L1506.6 732.2 L1536 728M1407.6 733.5 L1468 776M1506.6 732.2 L1526 751.6 L1536 760M834 52 L859 62 L882 62 L905.5 80.5 L949 93.5 L968 113.5 L1042 157 L1052.5 165.5 L1048 195.5 L1052.5 213 L1047 230M834 52 L798 107 L823 137 L820.5 163.5 L835.5 195 L789 208 L758 214M882 62 L862 87 L845.5 99 L823 137M845.5 99 L893 125.5M905.5 80.5 L903 87 L912.5 99 L893 125.5 L879 147 L857 179 L878 188 L873 204 L859 199 L863 183M823 137 L868 137 L879 147 L908 157 L933 173 L940.5 190.5 L947 230M949 93.5 L927 130.5 L908 157M927 130.5 L945.5 133 L964 139M968 113.5 L964 123 L964 139 L964 157 L933 173M964 139 L978 160 L1042 157M1042 157 L1023 188 L1030.5 195.5 L1029 209 L1040.5 230M1042 157 L1033 193 L1034 213 L1043 230M878 188 L890.5 198 L899 230M835.5 195 L850.5 198 L863 210.5 L873 230 L879 241 L886 264M789 208 L842 213 L865.5 230 L879 241M789 208 L812 230M1000 50 L1030.5 72 L1063 112 L1073 109 L1093 77 L1067 48M1120 67 L1142 81 L1167 71.5 L1204 48M1120 67 L1137.5 94 L1140 126.5 L1147 137 L1203 108 L1239.5 48M1121 48 L1124.5 61 L1143 68 L1160 62 L1183 48M1208 110 L1252 48M1208 110 L1211 138 L1228 143 L1242 160 L1209 173.5 L1201 162 L1211 138M1209 173.5 L1225.5 179 L1269 180.5M1518 111 L1536 111M1518 111 L1536 137M1536 156 L1518 192M1509 48 L1512 58 L1509 67M1345 48 L1352 56 L1395 59 L1430 63 L1436 67M1378 48 L1380 58 L1400 58 L1401 48M1432 58 L1440 55 L1446 62 L1438 66 L1432 58M1473 48 L1468 67M903.3 470 L885.6 509.4 L850.1 544.9 L810.7 576.5 L802.8 596.2 L781.1 655.3M748 195 L758 214M757 214 L754 226 L751 262M751 222 L754 226" fill="none" stroke="#df8d4e" stroke-width="2" stroke-linejoin="round" stroke-linecap="round"/>
<g font-family="Liberation Sans, Arial, sans-serif" font-size="11" fill="#1c1c1c" text-anchor="middle">
<text x="233.8" y="84.5">18</text>
<text x="370" y="121.5">17</text>
<text x="85" y="207.5">14</text>
<text x="576" y="79">10</text>
<text x="385" y="134">16</text>
<text x="404.5" y="137.8">15</text>
<text x="420.5" y="146.5">14</text>
<text x="459" y="158">13</text>
<text x="506.5" y="134">12</text>
<text x="543.5" y="130.8">11</text>
<text x="836.8" y="98.8">22</text>
<text x="876" y="97.8">20</text>
<text x="855" y="126">21</text>
<text x="911.8" y="122">19</text>
<text x="944.8" y="120">17</text>
<text x="999.8" y="139.5">16</text>
<text x="933" y="155">18</text>
<text x="983.8" y="193.8">15</text>
<text x="899" y="204">14</text>
<text x="866" y="196">38</text>
<text x="861" y="204.5">13</text>
<text x="830.5" y="222.5">12</text>
<text x="1040" y="72">1</text>
<text x="1035.5" y="202.8">1</text>
<text x="1178" y="71.2">1</text>
<text x="1218.4" y="159.2">28</text>
<text x="245" y="246">19</text>
<text x="111.8" y="271">15</text>
<text x="205.5" y="286">16</text>
<text x="174.2" y="335.2">1</text>
<text x="215" y="340.2">2</text>
<text x="318.8" y="339.5">20</text>
<text x="266.8" y="387">1</text>
<text x="406" y="288">21</text>
<text x="372" y="432.5">3</text>
<text x="429.7" y="445">1</text>
<text x="833.8" y="251">11</text>
<text x="815.8" y="295.8">10</text>
<text x="855.5" y="286.5">24</text>
<text x="847.5" y="313.2">25</text>
<text x="831.2" y="343.2">26</text>
<text x="935" y="308.5">23</text>
<text x="992" y="337">29</text>
<text x="1025" y="322">30</text>
<text x="1057.5" y="310">1</text>
<text x="1069.2" y="295.2">2</text>
<text x="1095" y="281.5">3</text>
<text x="1118.3" y="272.8">4</text>
<text x="933.8" y="367.2">28</text>
<text x="860.5" y="381.5">27</text>
<text x="791.8" y="380.2">5</text>
<text x="1049.6" y="387.3">31</text>
<text x="1033.1" y="416">32</text>
<text x="1122.5" y="360.8">5</text>
<text x="1168.3" y="436">6</text>
<text x="1293.1" y="478.6">7</text>
<text x="1352.1" y="445.6">8</text>
<text x="1359.1" y="478.6">9</text>
<text x="1391.3" y="459.2">10</text>
<text x="1393.2" y="431.3">37</text>
<text x="1480.2" y="431.3">11</text>
<text x="1387" y="518.2">14</text>
<text x="1443.7" y="533">13</text>
<text x="1126.3" y="505">18</text>
<text x="1070" y="551">19</text>
<text x="1156.1" y="556.6">17</text>
<text x="1221.3" y="569.8">16</text>
<text x="974.9" y="590.4">32</text>
<text x="1013.7" y="424">33</text>
<text x="1006.5" y="440">34</text>
<text x="996.9" y="469">35</text>
<text x="980.7" y="481.6">36</text>
<text x="1306.7" y="614">15</text>
<text x="986.6" y="721.5">24</text>
<text x="956.5" y="731.5">25</text>
<text x="794.5" y="447">3</text>
<text x="831.2" y="447">4</text>
<text x="820.5" y="496">5</text>
<text x="712.8" y="499.8">2</text>
<text x="940.5" y="475.8">37</text>
<text x="919.5" y="512.8">36</text>
<text x="912.5" y="538.5">35</text>
<text x="903.8" y="556">34</text>
<text x="888" y="574">33</text>
<text x="601.8" y="530.8">4</text>
<text x="663" y="557">1</text>
<text x="582" y="586.5">5</text>
<text x="636.2" y="625.6">6</text>
<text x="594.5" y="643.5">4</text>
<text x="505.5" y="651.5">3</text>
<text x="378.2" y="609">1</text>
<text x="422" y="609.8">2</text>
<text x="750" y="613.5">6</text>
<text x="886.2" y="631.8">31</text>
<text x="818.8" y="658.8">30</text>
<text x="672" y="688.5">7</text>
<text x="633.8" y="698.5">5</text>
<text x="727" y="737.5">9</text>
<text x="739.5" y="760">8</text>
<text x="867" y="755.5">29</text>
<text x="936.2" y="736">26</text>
<text x="626.8" y="767.2">6</text>
<text x="543" y="775.5">8</text>
<text x="592.5" y="777.5">7</text>
<text x="322.5" y="453.5">2</text>
<text x="1435.6" y="62.2">22</text>
<text x="1453.2" y="62.2">21</text>
<text x="1417.4" y="51.6">23</text>
<text x="1483.8" y="70">20</text>
<text x="1533.7" y="433.2">1</text>
</g>
</svg>

<div class="nav">
  <a class="brand" href="#">İMARBİS</a>
  <a href="#" style="left:281px">Harita</a>
  <a href="#" style="left:334px">Başvurular</a>
  <a href="#" style="left:417px">Parsel Yükle</a>
  <a href="#" style="left:508.5px">Admin</a>
  <a href="#" style="left:1164.5px">AdminSerkan</a>
  <a href="#" style="left:1264px">Çıkış</a>
  <svg style="position:absolute;left:1308px;top:16.5px" width="15" height="15" viewBox="0 0 16 16" fill="#adb0b3"><path d="M8 16a2 2 0 0 0 2-2H6a2 2 0 0 0 2 2zm.995-14.901a1 1 0 1 0-1.99 0A5.002 5.002 0 0 0 3 6c0 1.098-.5 6-2 7h14c-1.5-1-2-5.902-2-7 0-2.42-1.72-4.44-4.005-4.901z"/></svg>
  <svg style="position:absolute;left:1329px;top:21.200px" width="7.700" height="4.800" viewBox="0 0 8 5"><path d="M0 0h8L4 4.6z" fill="#adb0b3"/></svg>
  <span class="badge">1</span>
  <div style="position:absolute;left:0;top:0;width:1px;height:49px;background:#3a3e44"></div>
</div>

<div class="bar zb" style="top:58.600px">
  <div class="dis"><svg width="26" height="26" viewBox="0 0 26 26"><path d="M8 13h10M13 8v10" stroke="#b5b5b5" stroke-width="1.4" fill="none"/></svg></div>
  <div><svg width="26" height="26" viewBox="0 0 26 26"><path d="M8.3 13.6h9.4" stroke="#000" stroke-width="2.2" fill="none"/></svg></div>
</div>
<div class="bar db" style="top:123.800px">
  <div><svg width="26" height="26" viewBox="0 0 26 26"><path d="M8.800 17.200L17.200 8.800" stroke="#464646" stroke-width="1.400"/><circle cx="8.700" cy="17.300" r="1.500" fill="#464646"/><circle cx="17.300" cy="8.700" r="1.500" fill="#464646"/></svg></div>
  <div><svg width="26" height="26" viewBox="0 0 26 26"><path d="M13.600 7.700l5.200 4.600-2.900 6.200-6.300-.7-1.700-6.200z" fill="#464646"/></svg></div>
  <div><svg width="26" height="26" viewBox="0 0 26 26"><rect x="8.400" y="8.400" width="9.200" height="9.200" fill="#464646"/></svg></div>
  <div><svg width="26" height="26" viewBox="0 0 26 26"><circle cx="13" cy="13" r="5.100" fill="#464646"/></svg></div>
  <div><svg width="26" height="26" viewBox="0 0 26 26"><path d="M13 7.200a3.900 3.900 0 0 0-3.900 3.900c0 2.900 3.900 7.600 3.900 7.600s3.900-4.700 3.900-7.600A3.900 3.900 0 0 0 13 7.200zm0 5.400a1.500 1.500 0 1 1 0-3 1.500 1.500 0 0 1 0 3z" fill="#464646"/></svg></div>
  <div><svg width="26" height="26" viewBox="0 0 26 26"><circle cx="13" cy="13" r="5" fill="none" stroke="#464646" stroke-width="1.3"/></svg></div>
</div>
<div class="bar zb" style="top:298.600px">
  <div class="dis"><svg width="26" height="26" viewBox="0 0 26 26" fill="none" stroke="#464646" stroke-width="1.5"><path d="M16.5 13.5v3.2a1.3 1.3 0 0 1-1.3 1.3H9.3A1.3 1.3 0 0 1 8 16.700V10.8a1.3 1.3 0 0 1 1.300-1.300h3.2"/><path d="M18.700 7.3l-6 6-.5 1.500 1.500-.5 6-6z" fill="#464646" stroke="none"/></svg></div>
  <div class="dis"><svg width="26" height="26" viewBox="0 0 26 26" fill="#6a6a6a"><path d="M8.500 10h9v1.400h-9zM11.500 8.300h3v1.200h-3zM9.300 12.200h7.400l-.5 6.800H9.800z"/></svg></div>
</div>

<div class="layers"><svg width="52" height="52" viewBox="0 0 52 52" style="position:absolute;left:.400px;top:.400px">
 <path d="M14.800 31.200L26.500 37.600l11.700-6.400" fill="none" stroke="#979797" stroke-width="2" stroke-linejoin="round"/>
 <path d="M14.800 27.600L26.500 34l11.700-6.400" fill="none" stroke="#ababab" stroke-width="2" stroke-linejoin="round"/>
 <path d="M26.500 16.300L14.600 23l11.900 6.700L38.400 23z" fill="#e9e9e9"/>
 <path d="M26.500 19L19.500 23l7 4 7-4z" fill="#d3d3d3"/>
 <path d="M14.600 23.300l11.900 6.700L38.400 23.300" fill="none" stroke="#a5a5a5" stroke-width="1.300"/></svg></div>
<div class="coords">EPSG:5255 (TM33) | X: 589721.77 Y: 4645382.73</div>
<div class="attr"><a href="#"><svg width="11" height="7" viewBox="0 0 12 8" preserveAspectRatio="none"><path fill="#4C7BE1" d="M0 0h12v4H0z"/><path fill="#FFD500" d="M0 4h12v3H0z"/><path fill="#E0BC00" d="M0 7h12v1H0z"/></svg>Leaflet</a> <span style="color:#555">|</span> krmsoft</div>

<div class="popup">
  <h5>Parsel Bilgileri</h5>
  <div class="x">×</div>
  <table>
    <tr><td>İl:</td><td>Kastamonu</td></tr>
    <tr><td>İlçe:</td><td>Abana</td></tr>
    <tr><td>Mahalle:</td><td>Akçam</td></tr>
    <tr><td>Ada:</td><td>156</td></tr>
    <tr><td>Parsel:</td><td>4</td></tr>
    <tr><td>Alan:</td><td>1556.48 m²</td></tr>
    <tr><td>Pafta:</td><td>E32-A-07-B-1-C</td></tr>
    <tr><td>Nitelik:</td><td style="letter-spacing:-.16px">İki Katlı Kargir Ev Ve Ahır Ve Samanlık<br>Ve Tarla</td></tr>
    <tr><td>Mevkii:</td><td>Tarakçı</td></tr>
  </table>
  <div class="pbtn" style="top:269.800px;background:#346dee">İmar Durumu PDF İndir</div>
  <div class="pbtn" style="top:304.500px;background:#3e8558">Köy Yerleşik Alanı PDF İndir</div>
</div>
<div class="tipc"><div class="tip"></div></div>

<div class="panel">
  <div class="hd">Parsel Sorgula</div>
  <label style="top:49.900px">İlçe</label>
  <div class="inp" style="top:74.1px">Abana</div>
  <label style="top:112.800px">Mahalle</label>
  <div class="inp" style="top:136.8px"></div>
  <label style="top:175.500px">Ada</label>
  <div class="inp" style="top:199.2px"></div>
  <label style="top:238.300px">Parsel</label>
  <div class="inp" style="top:262.2px"></div>
  <div class="btn">Sorgula</div>
</div>
<div class="edge"></div>
<svg style="position:absolute;left:0;top:768px;z-index:21" width="1536" height="8" viewBox="0 0 1536 8"><path d="M0 0v8h8Q1.500 7 0 0zM1536 0v8h-8q6.500-1 8-8z" fill="#1d1f1a"/></svg>
</body>
</html>
